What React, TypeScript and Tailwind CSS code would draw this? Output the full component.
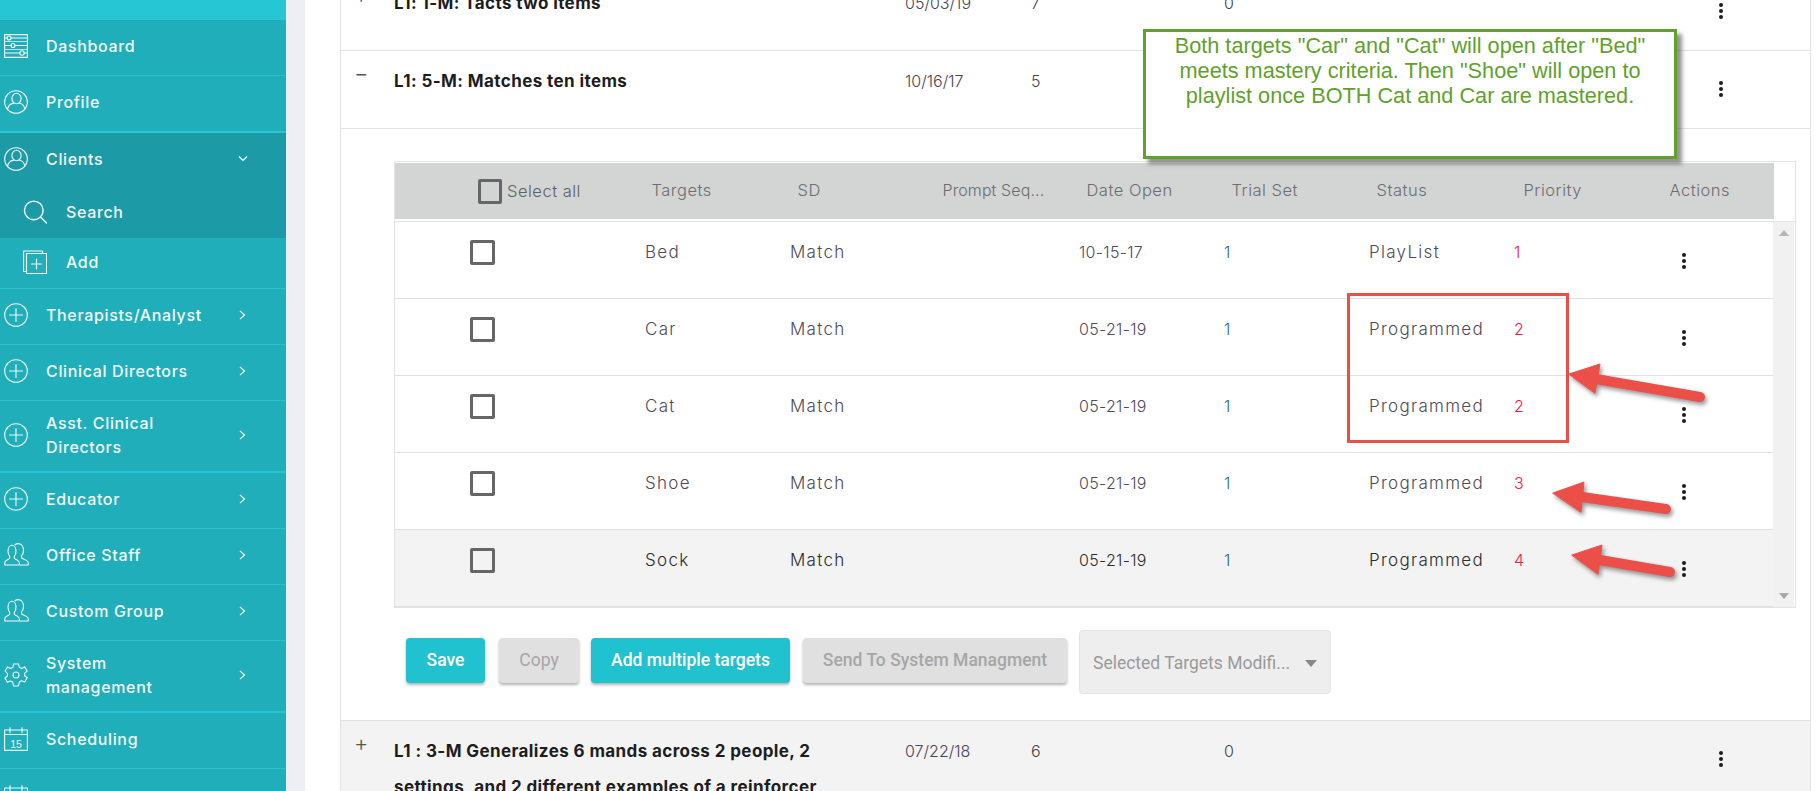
import React from 'react';

const S = { fill: 'none', stroke: 'currentColor', strokeWidth: 1.1, strokeLinecap: 'round' as const, strokeLinejoin: 'round' as const };

const Sliders = () => (
  <svg width="24" height="24" viewBox="0 0 24 24" {...S}>
    <rect x="0.6" y="0.6" width="22.8" height="22.8" />
    <path d="M1 7.5h22M1 15.5h22" opacity="0.7" />
    <path d="M7 4h16M1 4h2M11 11.5h12M1 11.5h6M1 19h15M20 19h3" />
    <circle cx="5" cy="4" r="2" /><circle cx="9" cy="11.5" r="2" /><circle cx="18" cy="19" r="2.2" />
  </svg>
);
const UserCircle = () => (
  <svg width="24" height="24" viewBox="0 0 24 24" {...S}>
    <circle cx="12" cy="12" r="11.3" />
    <ellipse cx="12.5" cy="8.5" rx="4.6" ry="5.2" />
    <path d="M3.5 19.5c.6-3.8 3.6-6 6.2-6.4M14.8 13c3 .4 5.4 2.5 6 6" />
  </svg>
);
const PlusCircle = () => (
  <svg width="24" height="24" viewBox="0 0 24 24" {...S}>
    <circle cx="12" cy="12" r="11.3" />
    <path d="M12 5.5v13M5.5 12h13" />
  </svg>
);
const Group = () => (
  <svg width="25" height="23" viewBox="0 0 25 23" {...S}>
    <path d="M0.8 22h14.5v-2.500c0-2-3.600-3-5-4.200v-2c1.200-1.200 1.700-3 1.700-5 0-3.500-1.800-6-4-6s-4 2.500-4 6c0 2 .5 3.800 1.700 5v2c-1.400 1.200-4.900 2.200-4.900 4.200z" />
    <path d="M11 1.800c.8-.8 2-1.200 3.200-1.200 3.200 0 5.300 3 5.300 6.800 0 2.200-.6 4-1.900 5.300v2.300c1.700 1.300 6.600 2.200 6.600 4.500V22h-8" />
  </svg>
);
const Gear = () => (
  <svg width="24" height="24" viewBox="0 0 24 24" {...S}>
    <path d="M9.500 1h5l.8 3.300 2.300 1.100 3-1.500 2.600 4.200-2.600 2 .1 2.700 2.500 1.900-2.500 4.300-3.100-1.300-2.200 1.200L14.500 23h-5l-.8-4-2.300-1.100-3 1.300-2.500-4.300 2.500-1.900v-2.700L1 8.100l2.600-4.200 3 1.500 2.300-1.100z" />
    <circle cx="12" cy="12" r="3" />
  </svg>
);
const Calendar = () => (
  <svg width="24" height="24" viewBox="0 0 24 24" {...S}>
    <rect x="0.6" y="3" width="22.8" height="20.400" />
    <path d="M1 7.500h22M6 0.600v5M18 0.600v5" />
    <text x="12" y="20.500" textAnchor="middle" fill="currentColor" stroke="none" fontSize="10.500" fontFamily="Liberation Sans, sans-serif">15</text>
  </svg>
);
const SearchIc = () => (
  <svg width="24" height="24" viewBox="0 0 24 24" {...S} strokeWidth={1.4}>
    <circle cx="10.800" cy="10.400" r="9.300" />
    <path d="M17.500 17l6 6" />
  </svg>
);
const AddIc = () => (
  <svg width="24" height="24" viewBox="0 0 24 24" {...S}>
    <path d="M3 21.500H0.600V1h19v2.500" />
    <rect x="3.500" y="3.500" width="20" height="20" />
    <path d="M13.500 9v10M8.500 14h10" />
  </svg>
);
const ChevronR = () => (
  <svg width="7" height="10" viewBox="0 0 7 10" fill="none" stroke="currentColor" strokeWidth="1.200"><path d="M1 1l4.500 4L1 9" /></svg>
);
const ChevronD = () => (
  <svg width="10" height="7" viewBox="0 0 10 7" fill="none" stroke="currentColor" strokeWidth="1.200"><path d="M1 1.500l4 4 4-4" /></svg>
);
const Dots = () => (
  <svg width="4" height="16" viewBox="0 0 4 16" fill="#1c1c1c"><circle cx="2" cy="2" r="2" /><circle cx="2" cy="8" r="2" /><circle cx="2" cy="14" r="2" /></svg>
);

const navText = 'text-[16px] leading-[24px] font-medium tracking-[0.65px]';

function NavItem({ icon, label, chevron, cls }: { icon: React.ReactNode; label: React.ReactNode; chevron?: boolean; cls: string }) {
  return (
    <div className={`flex items-center pl-[4px] pr-[40px] ${cls}`}>
      <span className="w-[43px] shrink-0 flex -mr-px">{icon}</span>
      <span className={`flex-1 ${navText}`}>{label}</span>
      {chevron && <ChevronR />}
    </div>
  );
}

function SubItem({ icon, label, cls }: { icon: React.ReactNode; label: string; cls: string }) {
  return (
    <div className={`flex items-center pl-[23px] ${cls}`}>
      <span className="w-[43px] shrink-0 flex">{icon}</span>
      <span className={navText}>{label}</span>
    </div>
  );
}

function Sidebar() {
  return (
    <aside className="w-[286px] shrink-0 h-[791px] overflow-hidden bg-[#20aeba] text-[#f2fbfc]">
      <div className="h-[20px] bg-[#26c6d4]" />
      <NavItem icon={<Sliders />} label="Dashboard" cls="h-[56px] border-b border-[#2cc0cd] pb-[4px]" />
      <NavItem icon={<UserCircle />} label="Profile" cls="h-[57px] border-b-2 border-[#26c6d4] pb-[4px]" />
      <div className="bg-[#1c9aa6] h-[105px] flex flex-col">
        <div className="flex items-center pl-[4px] pr-[38px] h-[54px] pb-[3px]">
          <span className="w-[43px] shrink-0 flex -mr-px"><UserCircle /></span>
          <span className={`flex-1 ${navText}`}>Clients</span>
          <ChevronD />
        </div>
        <SubItem icon={<SearchIc />} label="Search" cls="h-[51px] pb-[2px]" />
      </div>
      <SubItem icon={<AddIc />} label="Add" cls="h-[51px] border-b border-[#2cc0cd] pb-[3px]" />
      <NavItem icon={<PlusCircle />} label="Therapists/Analyst" chevron cls="h-[56px] border-b border-[#2cc0cd] pb-[4px]" />
      <NavItem icon={<PlusCircle />} label="Clinical Directors" chevron cls="h-[56px] border-b border-[#2cc0cd] pb-[4px]" />
      <NavItem icon={<PlusCircle />} label={<>Asst. Clinical<br />Directors</>} chevron cls="h-[72px] border-b-2 border-[#26c6d4] pb-[3px]" />
      <NavItem icon={<PlusCircle />} label="Educator" chevron cls="h-[56px] border-b border-[#2cc0cd] pb-[4px]" />
      <NavItem icon={<Group />} label="Office Staff" chevron cls="h-[56px] border-b border-[#2cc0cd] pb-[4px]" />
      <NavItem icon={<Group />} label="Custom Group" chevron cls="h-[56px] border-b border-[#2cc0cd] pb-[4px]" />
      <NavItem icon={<Gear />} label={<>System<br />management</>} chevron cls="h-[72px] border-b-2 border-[#26c6d4] pb-[3px]" />
      <NavItem icon={<Calendar />} label="Scheduling" cls="h-[56px] border-b border-[#2cc0cd] pb-[4px]" />
      <NavItem icon={<Calendar />} label="Scheduling Pr" cls="h-[56px]" />
    </aside>
  );
}

function GoalRow({ toggle, title, date, count, zero, cls, dotsTop }: { toggle: string; title: React.ReactNode; date: string; count: string; zero?: string; cls: string; dotsTop: string }) {
  return (
    <div className={`flex border-b border-[#e3e3e3] pt-[12px] ${cls}`}>
      <span className="w-[53px] shrink-0 pl-[13px] text-[22px] leading-[20px] text-[#555] font-light">{toggle}</span>
      <div className="w-[511px] shrink-0 pr-[75px] text-[17px] tracking-[0.4px] leading-[36px] font-bold text-[#1d1d1d]">{title}</div>
      <span className="w-[126px] shrink-0 text-[16px] leading-[36px] font-light text-[#4b4453]">{date}</span>
      <span className="w-[193px] shrink-0 text-[16px] leading-[36px] font-light text-[#444]">{count}</span>
      <span className="w-[495px] shrink-0 text-[16px] leading-[36px] font-light text-[#444]">{zero}</span>
      <span className={`flex ${dotsTop}`}><Dots /></span>
    </div>
  );
}

const cols = 'grid grid-cols-[62px_175px_146px_145px_144px_145px_145px_147px_146px_124px]';

function HeaderRow() {
  const h = 'pl-[19.5px] text-[16.5px] tracking-[0.5px] text-[#6b6d70] font-light leading-[54px] whitespace-nowrap';
  return (
    <div className={`${cols} h-[56px] bg-[#d3d4d4]`}>
      <div />
      <div className="pl-[21px] flex items-center gap-[5px] text-[16.5px] tracking-[0.5px] text-[#5e6063] font-light">
        <span className="w-[24px] h-[25px] border-[3px] border-[#666] rounded-[2px]" />
        <span>Select all</span>
      </div>
      <div className={h}>Targets</div>
      <div className={h}>SD</div>
      <div className="pl-[19.5px] text-[16px] tracking-[0.1px] text-[#6b6d70] font-light leading-[54px] whitespace-nowrap">Prompt Seq...</div>
      <div className={h}>Date Open</div>
      <div className={h}>Trial Set</div>
      <div className={h}>Status</div>
      <div className={h}>Priority</div>
      <div className={h}>Actions</div>
    </div>
  );
}

type R = { t: string; d: string; s: string; p: string };
const rows: R[] = [
  { t: 'Bed', d: '10-15-17', s: 'PlayList', p: '1' },
  { t: 'Car', d: '05-21-19', s: 'Programmed', p: '2' },
  { t: 'Cat', d: '05-21-19', s: 'Programmed', p: '2' },
  { t: 'Shoe', d: '05-21-19', s: 'Programmed', p: '3' },
  { t: 'Sock', d: '05-21-19', s: 'Programmed', p: '4' },
];

function BodyRow({ r, last }: { r: R; last: boolean }) {
  const tone = last ? 'text-[#2b2b2b]' : 'text-[#4f4a58]';
  const c = `pl-3 pt-[18px] text-[17px] tracking-[1.3px] leading-[24px] font-light ${tone}`;
  const num = `pl-3 pt-[18px] text-[16px] tracking-[0.3px] leading-[24px] font-light ${tone}`;
  return (
    <div className={`${cols} h-[77px] border-b border-[#e0e0e0] ${last ? 'bg-[#f3f3f3]' : 'bg-white'}`}>
      <div />
      <div className="pl-[13px] pt-[18px]"><div className="w-[25px] h-[25px] border-[3px] border-[#666] rounded-[2px]" /></div>
      <div className={`${c} pl-[13px]`}>{r.t}</div>
      <div className={c}>Match</div>
      <div />
      <div className={num}>{r.d}</div>
      <div className="pl-3 pt-[18px] text-[16px] leading-[24px] font-light text-[#1f6a85]">1</div>
      <div className={c}>{r.s}</div>
      <div className="pl-[10px] pt-[18px] text-[16px] leading-[24px] font-light text-[#f5173c]">{r.p}</div>
      <div className="pl-[32px] pt-[31px]"><Dots /></div>
    </div>
  );
}

function TargetsTable() {
  return (
    <div className="w-[1402px] border border-[#e3e3e3]">
      <div className="pt-px w-[1379px]"><HeaderRow /></div>
      <div className="h-[3px] border-b border-[#e3e3e3]" />
      <div className="flex">
        <div className="w-[1378px] shrink-0">
          {rows.map((r, i) => <BodyRow key={r.t} r={r} last={i === rows.length - 1} />)}
        </div>
        <div className="w-[21px] bg-[#f1f1f1] flex flex-col items-center justify-between py-[8px]">
          <span className="w-0 h-0 border-x-[5px] border-x-transparent border-b-[6px] border-b-[#b5b5b5]" />
          <span className="w-0 h-0 border-x-[5px] border-x-transparent border-t-[6px] border-t-[#a8a8a8]" />
        </div>
      </div>
    </div>
  );
}

function Actions() {
  const base = 'h-[45px] mb-[4px] rounded-[4px] text-[17.5px] font-medium shadow-[0_2px_3px_rgba(0,0,0,0.3)] flex items-center justify-center whitespace-nowrap';
  const on = `${base} bg-[#20c2cf] text-white`;
  const off = `${base} bg-[#e0e0e0] text-[#a6a6a6]`;
  return (
    <div className="flex items-center pl-[12px] pt-[22px] font-['Roboto',sans-serif]">
      <div className={`${on} w-[79px] font-bold`}>Save</div>
      <div className={`${off} w-[80px] ml-[14px] font-normal`}>Copy</div>
      <div className={`${on} w-[199px] ml-[12px] font-bold`}>Add multiple targets</div>
      <div className={`${off} w-[264px] ml-[13px]`}>Send To System Managment</div>
      <div className="w-[252px] h-[64px] ml-[12px] rounded-[4px] bg-[#eeeeee] border border-[#e4e4e4] flex items-center pl-[13px] pr-[13px] pt-[2px] text-[17.5px] text-[#9a9a9a] gap-[8px]">
        <span className="flex-1 whitespace-nowrap">Selected Targets Modifi...</span>
        <span className="w-0 h-0 border-x-[6px] border-x-transparent border-t-[7px] border-t-[#888]" />
      </div>
    </div>
  );
}

function Annotations() {
  return (
    <>
      <div className="absolute left-[1143px] top-[29px] w-[534px] h-[130px] bg-white border-[3px] border-[#5fa12c] shadow-[5px_5px_4px_rgba(60,60,60,0.55)] text-center text-[#5fa12c] text-[21.7px] leading-[25px] font-['Liberation_Sans',sans-serif] pt-[1px] px-[10px]">
        Both targets "Car" and "Cat" will open after "Bed" meets mastery criteria. Then "Shoe" will open to playlist once BOTH Cat and Car are mastered.
      </div>
      <div className="absolute left-[1347px] top-[293px] w-[222px] h-[150px] border-[3px] border-[#ec4e48]" />
      <svg className="absolute left-0 top-0 drop-shadow-[2px_3px_2px_rgba(0,0,0,0.4)]" width="1819" height="791" viewBox="0 0 1819 791" fill="#ec4e48" stroke="#ec4e48" strokeLinecap="round">
        <polygon points="1569,374 1600,364 1595,393" strokeWidth="1" />
        <line x1="1596" y1="379" x2="1700" y2="397" strokeWidth="10" />
        <polygon points="1553,493 1584,482 1581,512" strokeWidth="1" />
        <line x1="1582" y1="497" x2="1666" y2="509" strokeWidth="10" />
        <polygon points="1572,555 1602,545 1598,574" strokeWidth="1" />
        <line x1="1600" y1="560" x2="1670" y2="572" strokeWidth="10" />
      </svg>
    </>
  );
}

export default function App() {
  return (
    <div className="relative flex w-[1819px] h-[791px] overflow-hidden bg-white font-['Inter',sans-serif]">
      <Sidebar />
      <div className="w-[19px] shrink-0 bg-[#eeeff5]" />
      <main className="flex-1 pl-[35px] pr-[8px] min-w-0">
        <div className="border-x border-[#e3e3e3] -mt-[27px] min-h-[900px]">
          <GoalRow toggle="+" title="L1: 1-M: Tacts two items" date="05/03/19" count="7" zero="0" cls="h-[78px]" dotsTop="pt-[18px]" />
          <GoalRow toggle="−" title="L1: 5-M: Matches ten items" date="10/16/17" count="5" cls="h-[78px]" dotsTop="pt-[18px]" />
          <div className="h-[592px] pl-[53px] pt-[32px] border-b border-[#e3e3e3]">
            <TargetsTable />
            <Actions />
          </div>
          <GoalRow toggle="+" title="L1 : 3-M Generalizes 6 mands across 2 people, 2 settings, and 2 different examples of a reinforcer" date="07/22/18" count="6" zero="0" cls="h-[100px] bg-[#f3f3f3] border-b-0" dotsTop="pt-[18px]" />
        </div>
      </main>
      <Annotations />
    </div>
  );
}
